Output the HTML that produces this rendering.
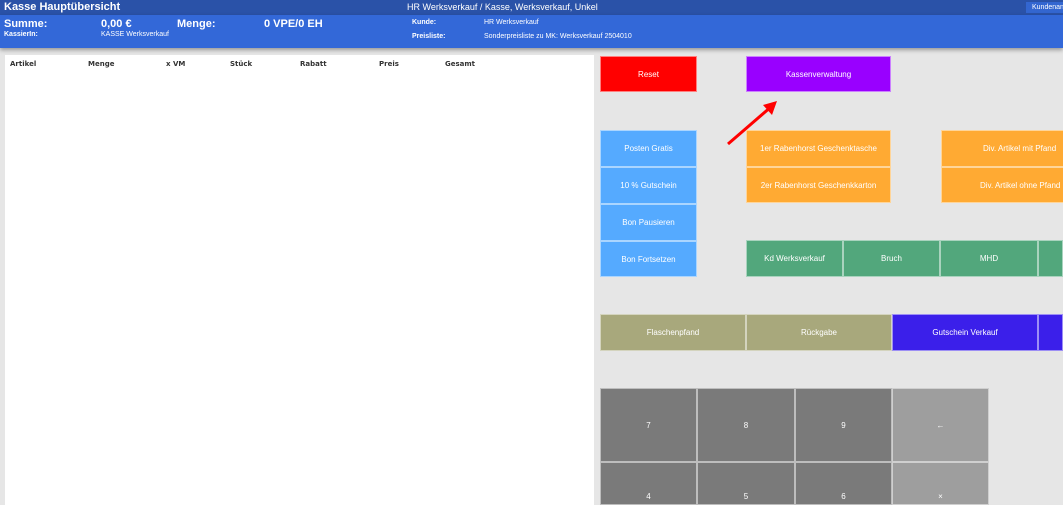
<!DOCTYPE html>
<html><head><meta charset="utf-8"><style>
*{margin:0;padding:0;box-sizing:border-box}
html{width:1063px;height:505px;overflow:hidden}
body{width:1063px;height:505px;overflow:hidden;background:#e6e6e6;font-family:"Liberation Sans",sans-serif;position:relative}
.a{position:absolute}
.t{color:#fff}
.b{position:absolute;color:#fff;font-size:8px;display:flex;align-items:center;justify-content:center;border:1px solid rgba(255,255,255,.5)}
.h{font-size:7px;font-weight:bold;color:#333;position:absolute;top:60px;font-family:"DejaVu Sans",sans-serif}
</style></head><body>
<div class="a" style="left:0;top:0;width:1063px;height:15px;background:#2a52a8"></div>
<div class="a t" style="left:4px;top:1px;font-size:11px;font-weight:bold">Kasse Hauptübersicht</div>
<div class="a t" style="left:407px;top:2px;font-size:9px">HR Werksverkauf / Kasse, Werksverkauf, Unkel</div>
<div class="a t" style="left:1026px;top:2px;width:40px;height:11px;background:#3366d0;font-size:7px;padding:2px 0 0 6px;white-space:nowrap">Kundenans</div>
<div class="a" style="left:0;top:15px;width:1063px;height:33px;background:#3368d8;box-shadow:0 2px 4px rgba(0,0,0,.35)"></div>
<div class="a t" style="left:4px;top:18px;font-size:11px;font-weight:bold">Summe:</div>
<div class="a t" style="left:101px;top:18px;font-size:11px;font-weight:bold">0,00 €</div>
<div class="a t" style="left:177px;top:18px;font-size:11px;font-weight:bold">Menge:</div>
<div class="a t" style="left:264px;top:18px;font-size:11px;font-weight:bold">0 VPE/0 EH</div>
<div class="a t" style="left:4px;top:31px;font-size:7px;font-weight:bold">KassierIn:</div>
<div class="a t" style="left:101px;top:31px;font-size:7px">KASSE Werksverkauf</div>
<div class="a t" style="left:412px;top:19px;font-size:7px;font-weight:bold">Kunde:</div>
<div class="a t" style="left:484px;top:19px;font-size:7px">HR Werksverkauf</div>
<div class="a t" style="left:412px;top:33px;font-size:7px;font-weight:bold">Preisliste:</div>
<div class="a t" style="left:484px;top:33px;font-size:7px">Sonderpreisliste zu MK: Werksverkauf 2504010</div>
<div class="a" style="left:5px;top:55px;width:589px;height:450px;background:#fff"></div>
<div class="h" style="left:10px">Artikel</div><div class="h" style="left:88px">Menge</div><div class="h" style="left:166px">x VM</div><div class="h" style="left:230px">Stück</div><div class="h" style="left:300px">Rabatt</div><div class="h" style="left:379px">Preis</div><div class="h" style="left:445px">Gesamt</div>
<div class="b" style="left:600px;top:56px;width:97px;height:36px;background:#f00">Reset</div>
<div class="b" style="left:746px;top:56px;width:145px;height:36px;background:#9900ff">Kassenverwaltung</div>
<svg class="a" style="left:720px;top:96px" width="64" height="56"><line x1="8" y1="48" x2="52" y2="10" stroke="#f00" stroke-width="3"/><polygon points="57,5 43,9 52,19" fill="#f00"/></svg>
<div class="b" style="left:600px;top:130px;width:97px;height:37px;background:#55aaff">Posten Gratis</div>
<div class="b" style="left:600px;top:167px;width:97px;height:37px;background:#55aaff">10 % Gutschein</div>
<div class="b" style="left:600px;top:204px;width:97px;height:37px;background:#55aaff">Bon Pausieren</div>
<div class="b" style="left:600px;top:241px;width:97px;height:36px;background:#55aaff">Bon Fortsetzen</div>
<div class="b" style="left:746px;top:130px;width:145px;height:37px;background:#ffaa33">1er Rabenhorst Geschenktasche</div>
<div class="b" style="left:746px;top:167px;width:145px;height:36px;background:#ffaa33">2er Rabenhorst Geschenkkarton</div>
<div class="b" style="left:941px;top:130px;width:145px;height:37px;background:#ffaa33;justify-content:flex-start;padding-left:41px">Div. Artikel mit Pfand</div>
<div class="b" style="left:941px;top:167px;width:145px;height:36px;background:#ffaa33;justify-content:flex-start;padding-left:38px">Div. Artikel ohne Pfand</div>
<div class="b" style="left:746px;top:240px;width:97px;height:37px;background:#52a77c">Kd Werksverkauf</div>
<div class="b" style="left:843px;top:240px;width:97px;height:37px;background:#52a77c">Bruch</div>
<div class="b" style="left:940px;top:240px;width:98px;height:37px;background:#52a77c">MHD</div>
<div class="b" style="left:1038px;top:240px;width:25px;height:37px;background:#52a77c"></div>
<div class="b" style="left:600px;top:314px;width:146px;height:37px;background:#a8a87c">Flaschenpfand</div>
<div class="b" style="left:746px;top:314px;width:146px;height:37px;background:#a8a87c">Rückgabe</div>
<div class="b" style="left:892px;top:314px;width:146px;height:37px;background:#3b1fea">Gutschein Verkauf</div>
<div class="b" style="left:1038px;top:314px;width:25px;height:37px;background:#3b1fea"></div>
<div class="b" style="left:600px;top:388px;width:97px;height:74px;background:#7a7a7a">7</div>
<div class="b" style="left:697px;top:388px;width:98px;height:74px;background:#7a7a7a">8</div>
<div class="b" style="left:795px;top:388px;width:97px;height:74px;background:#7a7a7a">9</div>
<div class="b" style="left:892px;top:388px;width:97px;height:74px;background:#9e9e9e">←</div>
<div class="b" style="left:600px;top:462px;width:97px;height:43px;background:#7a7a7a;align-items:flex-end;padding-bottom:3px">4</div>
<div class="b" style="left:697px;top:462px;width:98px;height:43px;background:#7a7a7a;align-items:flex-end;padding-bottom:3px">5</div>
<div class="b" style="left:795px;top:462px;width:97px;height:43px;background:#7a7a7a;align-items:flex-end;padding-bottom:3px">6</div>
<div class="b" style="left:892px;top:462px;width:97px;height:43px;background:#9e9e9e;align-items:flex-end;padding-bottom:3px">×</div>
</body></html>
